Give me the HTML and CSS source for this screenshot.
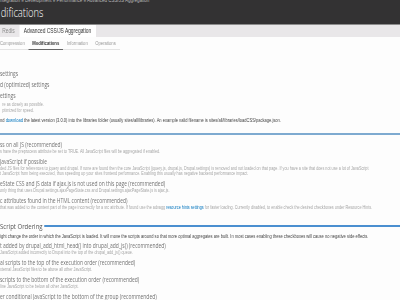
FILE: index.html
```html
<!DOCTYPE html>
<html lang="en">
<head>
    <meta charset="UTF-8">
    <title>Modifications | Advanced CSS/JS Aggregation</title>
    <link rel="stylesheet" href="styles.css">
</head>
<body>
<div class="page">
    <header class="header">
        <div class="breadcrumb">ntegration » Development » Performance » Advanced CSS/JS Aggregation</div>
        <h1 class="title">difications</h1>
    </header>

    <nav class="tabs">
        <a class="tab">Redis</a>
        <a class="tab active">Advanced CSS/JS Aggregation</a>
    </nav>

    <nav class="subtabs">
        <a>Compression</a>
        <a class="current">Modifications</a>
        <a>Information</a>
        <a>Operations</a>
    </nav>

    <div class="content">
        <div class="radios">
            <div class="radio">settings</div>
            <div class="radio">d (optimized) settings</div>
            <div class="radio">ettings</div>
            <div class="desc indent">re as closely as possible.<br>ptimized for speed.</div>
        </div>

        <p class="note">nd <a href="#">download</a> the latest version (3.0.0) into the libraries folder (usually sites/all/libraries). An example valid filename is sites/all/libraries/loadCSS/package.json.</p>

        <section class="group first">
            <div class="item">
                <div class="label">ss on all JS (recommended)</div>
                <div class="desc">s have the preprocess attribute be set to TRUE. All JavaScript files will be aggregated if enabled.</div>
            </div>
            <div class="item">
                <div class="label">JavaScript if possible</div>
                <div class="desc">ded JS files for references to jquery and drupal. If none are found then the core JavaScript (jquery.js, drupal.js, Drupal.settings) is removed and not loaded on that page. If you have a site that does not use a lot of JavaScript<br>t JavaScript from being executed, thus speeding up your sites frontend performance. Enabling this usually has negative backend performance impact.</div>
            </div>
            <div class="item">
                <div class="label">eState CSS and JS data if ajax.js is not used on this page (recommended)</div>
                <div class="desc">only thing that uses Drupal.settings.ajaxPageState.css and Drupal.settings.ajaxPageState.js is ajax.js.</div>
            </div>
            <div class="item">
                <div class="label">c attributes found in the HTML content (recommended)</div>
                <div class="desc">that was added to the content part of the page incorrectly for a src attribute. If found use the advagg <a href="#">resource hints settings</a> for faster loading. Currently disabled, to enable check the desired checkboxes under Resource Hints.</div>
            </div>
        </section>

        <section class="group">
            <div class="legend"><span>Script Ordering</span><i class="rule"></i></div>
            <p class="intro">ight change the order in which the JavaScript is loaded. It will move the scripts around so that more optimal aggregates are built. In most cases enabling these checkboxes will cause no negative side effects.</p>
            <div class="item">
                <div class="label">t added by drupal_add_html_head() into drupal_add_js() (recommended)</div>
                <div class="desc">JavaScript added incorrectly to Drupal into the top of the drupal_add_js() queue.</div>
            </div>
            <div class="item">
                <div class="label">al scripts to the top of the execution order (recommended)</div>
                <div class="desc">xternal JavaScript files to be above all other JavaScript.</div>
            </div>
            <div class="item">
                <div class="label">scripts to the bottom of the execution order (recommended)</div>
                <div class="desc">line JavaScript to be below all other JavaScript.</div>
            </div>
            <div class="item">
                <div class="label">er conditional JavaScript to the bottom of the group (recommended)</div>
                <div class="desc">ower conditional JavaScript to be in the lowest group of that conditional rule.</div>
            </div>
        </section>
    </div>
</div>
</body>
</html>
```

FILE: styles.css
```css
body {
    margin: 0;
    background: #fdfdfd;
    font-family: "Liberation Sans", Arial, sans-serif;
    overflow: hidden;
}
/* the capture is squeezed sideways, so the page is too */
.page {
    width: 534px;
    transform: scaleX(.75);
    transform-origin: 0 0;
}
a {
    color: #0074bd;
    text-decoration: none;
}

/* Cabecera */
.header {
    background: #333233;
    height: 24px;
    border-bottom: 1px solid #8c8c8c;
    overflow: hidden;
}
.breadcrumb {
    font-size: 6px;
    line-height: 6px;
    color: #b8b8b8;
    margin-top: -3px;
}
.title {
    margin: 3px 0 0 1px;
    font-family: "Open Sans", sans-serif;
    font-weight: 300;
    font-size: 12.5px;
    line-height: 14px;
    color: #fff;
}

/* Pestañas */
.tabs {
    display: flex;
    height: 12px;
    background: #e9e7e9;
}
.tab {
    font-size: 6.5px;
    line-height: 12px;
    color: #8a8a8a;
    padding: 0 4px 0 3px;
}
.tab.active {
    margin-left: 2px;
    padding: 0 6px;
    background: #fff;
    color: #333;
}
.subtabs {
    display: flex;
    width: 160px;
    border-bottom: 1px solid #e4e4e4;
}
.subtabs a {
    font-size: 5.6px;
    line-height: 8px;
    padding: 2px 5px;
    color: #999;
}
.subtabs a:first-child {
    padding-left: 0;
}
.subtabs a.current {
    color: #333;
    font-weight: bold;
    border-bottom: 1px solid #666;
    margin-bottom: -1px;
}

/* Contenido */
.radios {
    margin-top: 18px;
}
.radio {
    font-family: "Open Sans", sans-serif;
    font-size: 6.6px;
    line-height: 11px;
    color: #707070;
}
.desc {
    font-size: 5px;
    line-height: 4.5px;
    color: #a6a6a6;
}
.desc.indent {
    line-height: 5.5px;
    margin: 1px 0 0 3px;
}
.note {
    margin: 4px 0 0;
    font-size: 5.4px;
    line-height: 6px;
    color: #444;
}
.group {
    padding-top: 6px;
}
.group.first {
    margin-top: 10px;
    border-top: 2px solid #7eaad0;
}
.item {
    margin-bottom: 4.5px;
}
.label {
    font-family: "Open Sans", sans-serif;
    font-size: 6.6px;
    line-height: 8px;
    color: #747474;
    white-space: nowrap;
}
.item .desc {
    white-space: nowrap;
}
.legend {
    display: flex;
    align-items: center;
    margin-top: 1px;
    font-family: "Open Sans", sans-serif;
    font-size: 8px;
    line-height: 10px;
    color: #555;
}
.rule {
    flex: 1;
    height: 2px;
    margin-left: 2px;
    background: #4a8fd0;
}
.intro {
    margin: 2px 0 3.7px;
    font-size: 5.4px;
    line-height: 6px;
    color: #444;
    white-space: nowrap;
}
```
